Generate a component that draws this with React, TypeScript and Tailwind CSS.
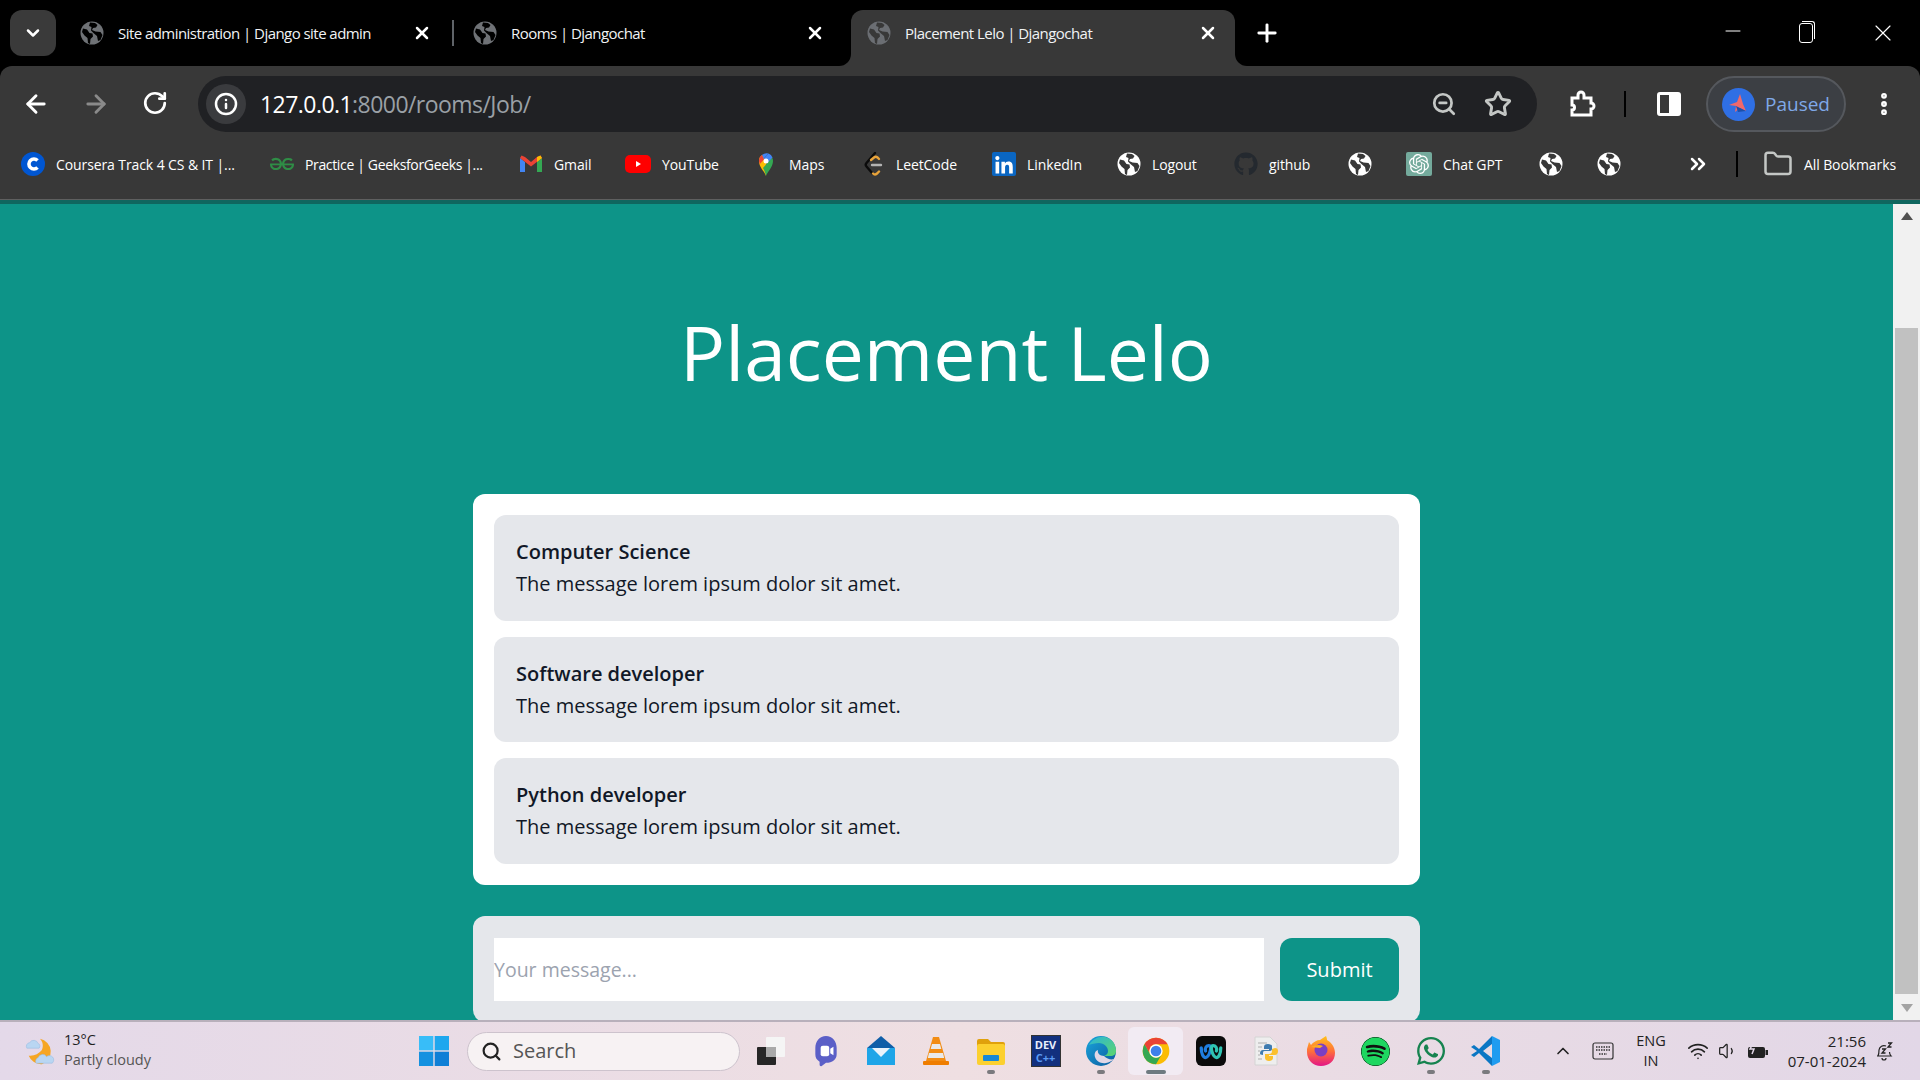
import { ArrowLeft, ArrowRight, ChevronDown, ChevronUp, ChevronsRight, EllipsisVertical, Folder, Info, Minus, Plus, RotateCw, Search, Star, Volume1, Wifi, X, ZoomOut } from 'lucide-react';
import { FaGithub, FaLinkedinIn, FaSpotify, FaWhatsapp } from 'react-icons/fa';
import { SiGeeksforgeeks, SiOpenai } from 'react-icons/si';

const Globe = ({ color = '#ffffff', cut = '#383838' }: { color?: string; cut?: string }) => (
  <svg viewBox="0 0 24 24" className="w-6 h-6 shrink-0">
    <circle cx="12" cy="12" r="11.5" fill={color} />
    <path d="M3 7.5l4 1 2.5 3.5 3 .5.5 3-2.5 2.5-.5 5-2-1-.5-5-3-2.500L2 11z" fill={cut} />
    <path d="M10 1.5l5 .5 2.5 2-1.5 2.500-3 .5-1 2 3.500 1.500 5 .5 2 3-2 5-2.500 1-1-5-3-2.500-3-3 .5-3.500-2.500-1z" fill={cut} />
  </svg>
);

const Tab = ({ title, active, sep }: { title: string; active?: boolean; sep?: boolean }) => (
  <div
    className={
      active
        ? 'relative w-[384px] h-[56px] ml-[1px] pl-[16px] pr-[17px] pb-[10px] flex items-center bg-[#383838] rounded-t-xl'
        : 'relative w-[393px] h-[56px] pl-[16px] pr-[25px] pb-[10px] flex items-center'
    }
  >
    <Globe color={active ? '#6b6e73' : '#6f7276'} cut={active ? '#383838' : '#000000'} />
    <span className="ml-[14px] flex-1 text-[15px] text-[#f1f3f4] whitespace-nowrap tracking-[-0.55px]">{title}</span>
    <X className="w-5 h-5 text-white" strokeWidth={3} />
    {sep && <div className="absolute right-[3px] top-[10px] w-[2px] h-[26px] bg-[#5f6368]" />}
    {active && (
      <>
        <div className="absolute left-[-12px] bottom-0 w-3 h-3 bg-[#383838]">
          <div className="w-3 h-3 bg-black rounded-br-xl" />
        </div>
        <div className="absolute right-[-12px] bottom-0 w-3 h-3 bg-[#383838]">
          <div className="w-3 h-3 bg-black rounded-bl-xl" />
        </div>
      </>
    )}
  </div>
);

const Coursera = () => (
  <svg viewBox="0 0 24 24" className="w-6 h-6 shrink-0">
    <circle cx="12" cy="12" r="12" fill="#0056d2" />
    <path d="M16.5 8.5a5 5 0 1 0 0 7" fill="none" stroke="#fff" strokeWidth="3.6" />
  </svg>
);

const Gmail = () => (
  <svg viewBox="0 0 24 24" className="w-6 h-6 shrink-0">
    <path d="M1 6v14h5V10z" fill="#4285f4" />
    <path d="M23 6v14h-5V10z" fill="#34a853" />
    <path d="M1 6l11 8.5L23 6l-1.5-2.5L18 5l-6 5-6-5-3.500-1.500z" fill="#ea4335" />
    <path d="M18 5l3.500-1.500L23 6l-5 4z" fill="#fbbc04" />
  </svg>
);

const YouTube = () => (
  <svg viewBox="0 0 26 24" className="w-[26px] h-6 shrink-0">
    <rect x="0" y="3" width="26" height="18" rx="5" fill="#ff0000" />
    <path d="M11 9l5 3-5 3z" fill="#fff" />
  </svg>
);

const Maps = () => (
  <svg viewBox="4 0 16 24" className="w-6 h-6 shrink-0">
    <path d="M12 24c-1-4-7-8.500-7-15a7 7 0 0 1 3-6l4.500 6z" fill="#fbbc04" />
    <path d="M12 24c1-4 7-8.500 7-15 0-1.200-.3-2.400-.9-3.400L9 16c1.300 2.400 2.500 5 3 8z" fill="#34a853" />
    <path d="M8 3a7 7 0 0 1 6.500-1.500L9.500 7z" fill="#4285f4" />
    <path d="M14.500 1.500A7 7 0 0 1 18.500 5.500L13.500 11l-4-4z" fill="#4285f4" />
    <path d="M5 9a7 7 0 0 1 3-6l2 4.500L5.800 12z" fill="#ea4335" />
    <circle cx="12" cy="9" r="2.500" fill="#fff" />
  </svg>
);

const LeetCode = () => (
  <svg viewBox="0 0 24 24" className="w-6 h-6 shrink-0" fill="none" strokeLinecap="round">
    <path d="M14 1L5.500 11c-1 1.200-1 2.500 0 3.500l6 7" stroke="#0b0b0b" strokeWidth="2.400" />
    <path d="M10 8l3-2.500c1-.8 2.500-.8 3.500 0L18 7" stroke="#e8a33a" strokeWidth="2.400" />
    <path d="M12 21.500c1 1 2.800 1 4 0l2-2" stroke="#e8a33a" strokeWidth="2.400" />
    <path d="M11 13h9" stroke="#b3b3b3" strokeWidth="2.400" />
  </svg>
);

const ChatGpt = () => (
  <div className="w-[26px] h-6 shrink-0 bg-[#74aa9c] flex items-center justify-center rounded-[2px]">
    <SiOpenai className="w-5 h-5 text-white" />
  </div>
);

const Profile = () => (
  <svg viewBox="0 0 33 33" className="w-[33px] h-[33px] shrink-0">
    <circle cx="16.500" cy="16.500" r="16.500" fill="#2f6fe4" />
    <path d="M18 6l3 10 3 7-6-3-5 4 1-6-7-1 8-3z" fill="#f0686a" />
    <path d="M14 18l4 2 6 3-8 1z" fill="#1d4fa8" />
  </svg>
);

const bookmarks = [
  { icon: <Coursera />, label: 'Coursera Track 4 CS & IT |...', w: 'w-[180px] tracking-[-0.1px]' },
  { icon: <SiGeeksforgeeks className="w-6 h-6 shrink-0 text-[#2f8d46]" />, label: 'Practice | GeeksforGeeks |...', w: 'w-[180px] tracking-[-0.35px]' },
  { icon: <Gmail />, label: 'Gmail', w: 'w-[37px] tracking-[-0.1px]' },
  { icon: <YouTube />, label: 'YouTube', w: 'w-[58px] tracking-[-0.1px]' },
  { icon: <Maps />, label: 'Maps', w: 'w-[38px] tracking-[-0.1px]' },
  { icon: <LeetCode />, label: 'LeetCode', w: 'w-[62px] tracking-[-0.1px]' },
  { icon: <div className="w-6 h-6 shrink-0 bg-[#0a66c2] rounded-[2px] flex items-end justify-center"><FaLinkedinIn className="w-5 h-5 text-white" /></div>, label: 'LinkedIn', w: 'w-[56px] tracking-[-0.1px]' },
  { icon: <Globe />, label: 'Logout', w: 'w-[48px] tracking-[-0.1px]' },
  { icon: <FaGithub className="w-6 h-6 shrink-0 text-[#24292f]" />, label: 'github', w: 'w-[45px] tracking-[-0.1px]' },
  { icon: <Globe /> },
  { icon: <ChatGpt />, label: 'Chat GPT', w: 'w-[62px] tracking-[-0.1px]' },
  { icon: <Globe /> },
  { icon: <Globe /> },
];

const messages = ['Computer Science', 'Software developer', 'Python developer'];

const Chrome = () => (
  <svg viewBox="0 0 48 48" className="w-8 h-8">
    <circle cx="24" cy="24" r="20" fill="#fbbc04" />
    <path d="M24 4A20 20 0 0 0 6.700 14L15.300 29A10 10 0 0 1 24 14H41.300A20 20 0 0 0 24 4Z" fill="#ea4335" />
    <path d="M6.700 14A20 20 0 0 0 24 44L32.700 29A10 10 0 0 1 15.300 29Z" fill="#34a853" />
    <circle cx="24" cy="24" r="10" fill="#fff" />
    <circle cx="24" cy="24" r="8" fill="#3f80ea" />
  </svg>
);

const taskbarIcons = [
  <svg viewBox="0 0 32 32" className="w-8 h-8">
    <rect x="2" y="12" width="19" height="18" rx="1" fill="#262626" />
    <rect x="11" y="2" width="19" height="20" rx="1" fill="#f5f5f5" />
    <rect x="11" y="12" width="10" height="10" fill="#a9a9a9" />
  </svg>,
  <svg viewBox="4 1 24 30" className="w-8 h-8">
    <path d="M16 2c6 0 10 5 10 11v6c0 5-4 8-10 8l-4 3c-1 .5-2 0-2-1v-3c-3-2-4-4-4-7v-6C6 7 10 2 16 2z" fill="#5b5fc7" />
    <rect x="11" y="11" width="8" height="10" rx="2" fill="#fff" />
    <path d="M20 14l3-2v8l-3-2z" fill="#fff" />
  </svg>,
  <svg viewBox="0 0 32 32" className="w-8 h-8">
    <path d="M2 13L16 1l14 12z" fill="#0f5ea8" />
    <rect x="2" y="13" width="28" height="17" fill="#1ea5e8" />
    <path d="M7 13h18l-9 9z" fill="#e9f3fb" />
  </svg>,
  <svg viewBox="0 0 32 32" className="w-8 h-8">
    <path d="M13 2h6l7 24H6z" fill="#f28c13" />
    <path d="M12 9h8l1.300 5H10.700zM9 18h14l1.200 5H7.800z" fill="#e9e9e9" />
    <rect x="3" y="26" width="26" height="4" rx="1" fill="#ef7d00" />
  </svg>,
  <svg viewBox="0 0 32 32" className="w-8 h-8">
    <path d="M2 6a2 2 0 0 1 2-2h9l3 3h12a2 2 0 0 1 2 2v4H2z" fill="#e0a10c" />
    <rect x="2" y="9" width="28" height="21" rx="2" fill="#fcd02f" />
    <rect x="8" y="20" width="16" height="6" rx="1" fill="#1788d6" />
  </svg>,
  <div className="w-[30px] h-[32px] bg-[#12307e] border border-[#333] flex flex-col items-center justify-center font-bold">
    <span className="text-[11px] leading-[13px] text-[#e8eefc]">DEV</span>
    <span className="text-[11px] leading-[13px] text-[#5b9bf5]">C++</span>
  </div>,
  <svg viewBox="0 0 32 32" className="w-8 h-8">
    <defs>
      <linearGradient id="edgeA" x1="0" y1="0" x2="1" y2="1">
        <stop offset="0" stopColor="#1aa5dc" />
        <stop offset="1" stopColor="#0c5a9e" />
      </linearGradient>
      <linearGradient id="edgeB" x1="0" y1="0" x2="1" y2="1">
        <stop offset="0" stopColor="#2bb5d8" />
        <stop offset="1" stopColor="#5ed66b" />
      </linearGradient>
    </defs>
    <circle cx="16" cy="16" r="15" fill="url(#edgeA)" />
    <path d="M4 10C8 3 16 0 23 3c5 2 8 7 8 13 0 3-2 5-6 5h-6c3-1 4-3 4-5 0-4-4-8-9-8-4 0-8 1-10 2z" fill="url(#edgeB)" />
    <path d="M19 21c-4 0-7-3-6-6-3 1-4 4-3 7 1 4 6 7 11 6 3-.5 6-2 8-4-3 1-7 0-10-3z" fill="#e1d7e6" />
  </svg>,
  <Chrome />,
  <div className="w-[30px] h-[30px] rounded-md bg-[#0b0b0b] flex items-center justify-center">
    <svg viewBox="0 0 24 24" className="w-[26px] h-[26px]">
      <path d="M3 9c0 6 2 9 4 9s3-2 4-5c1-3 1-6-1-6S6 9 7 12" fill="none" stroke="#1f7de0" strokeWidth="3" strokeLinecap="round" />
      <path d="M21 9c0 6-2 9-4 9s-3-2-4-5c-1-3-1-6 1-6s4 2 3 5" fill="none" stroke="#2fc4b2" strokeWidth="3" strokeLinecap="round" />
    </svg>
  </div>,
  <svg viewBox="0 0 32 32" className="w-8 h-8">
    <path d="M5 2h15l7 7v21H5z" fill="#eeeeee" stroke="#d4d4d4" />
    <path d="M8 8h9M8 12h4M8 16h2M8 20h2M8 24h4" stroke="#c4c4c4" strokeWidth="1.500" />
    <path d="M18 9c-3 0-4 1-4 3v2h5v1h-6c-2 0-3 1-3 4 0 0 1 1 3 1v-2c0-2 1-2 3-2h4c1 0 2-1 2-2v-3c0-1-2-2-4-2z" fill="#3f7cb0" />
    <path d="M22 14v2c0 2-1 3-3 3h-4v4c0 2 2 3 4 3s4-1 4-3v-2h-4v-1h6c2 0 3-2 3-4s-1-3-3-3z" fill="#fbc02d" />
  </svg>,
  <svg viewBox="0 0 32 32" className="w-8 h-8">
    <defs>
      <linearGradient id="fox" x1="0" y1="0" x2="0" y2="1">
        <stop offset="0" stopColor="#ffc21a" />
        <stop offset="0.500" stopColor="#ff7139" />
        <stop offset="1" stopColor="#e31587" />
      </linearGradient>
    </defs>
    <path d="M2 14l2-7 2 3c2-3 6-5 9-5l6-4c1 2 1 4 1 4 4 2 8 7 8 13 0 8-6 13-14 13S2 25 2 17z" fill="url(#fox)" />
    <circle cx="16" cy="15" r="6.500" fill="#7b3fc4" />
    <path d="M6 12c4-2 8-3 12-1l-3 2z" fill="#ffb01f" />
  </svg>,
  <div className="w-[29px] h-[29px] rounded-full bg-[#1ed760] flex items-center justify-center overflow-hidden">
    <FaSpotify className="w-[29px] h-[29px] text-[#1ed760] bg-[#111] rounded-full" />
  </div>,
  <FaWhatsapp className="w-8 h-8 text-[#16834f]" />,
  <svg viewBox="0 0 32 32" className="w-8 h-8">
    <path d="M22 1l8 4v22l-8 4V1z" fill="#1f9cf0" />
    <path d="M22 1L9 14l-5-4-3 2 6 4-6 4 3 2 5-4 13 13V23l-9-7 9-7z" fill="#0a77c4" />
  </svg>,
];

const activeDots = [4, 6, 12, 13];

export default function App() {
  return (
    <div className="h-screen w-screen overflow-hidden flex flex-col font-['Open_Sans',sans-serif]">
      <header className="bg-black shrink-0">
        <div className="h-[66px] flex items-end pl-[10px]">
          <div className="w-[46px] h-[46px] mb-[10px] mr-[8px] rounded-xl bg-[#3a3a3a] flex items-center justify-center">
            <ChevronDown className="w-5 h-5 text-white" strokeWidth={3} />
          </div>
          <Tab title="Site administration | Django site admin" sep />
          <Tab title="Rooms | Djangochat" />
          <Tab title="Placement Lelo | Djangochat" active />
          <Plus className="w-7 h-7 mb-[19px] ml-[18px] text-white" strokeWidth={2.5} />
          <div className="ml-auto flex mb-[19px] text-white">
            <div className="w-[75px] flex justify-center"><Minus className="w-6 h-6" strokeWidth={1} /></div>
            <div className="w-[75px] flex justify-center pr-[4px]">
              <div className="relative w-[14px] h-[20px] mt-[4px] border border-white rounded-[3px]">
                <div className="absolute top-[-3px] left-[2px] w-[13px] h-[18px] border-t border-r border-white rounded-tr-[3px]" />
              </div>
            </div>
            <div className="w-[75px] flex justify-center"><X className="w-7 h-7" strokeWidth={1} /></div>
          </div>
        </div>
        <div className="bg-[#383838] rounded-t-xl">
          <div className="h-[66px] pt-[10px] flex items-center text-white">
            <div className="pl-[6px] flex shrink-0">
              <div className="w-[60px] flex justify-center"><ArrowLeft className="w-7 h-7" strokeWidth={2.5} /></div>
              <div className="w-[60px] flex justify-center"><ArrowRight className="w-7 h-7 text-[#8a8a8a]" strokeWidth={2.5} /></div>
              <div className="w-[60px] flex justify-center pr-[2px]"><RotateCw className="w-[26px] h-[26px]" strokeWidth={2.5} /></div>
            </div>
            <div className="ml-[12px] w-[1339px] h-[56px] rounded-full bg-[#202124] flex items-center pr-[25px]">
              <div className="ml-[8px] w-[40px] h-[40px] rounded-full bg-[#3a3b3e] flex items-center justify-center">
                <Info className="w-6 h-6 text-white" strokeWidth={2.5} />
              </div>
              <div className="ml-[14px] flex-1 text-[23px] tracking-[-0.55px] text-[#9aa0a6]">
                <span className="text-white">127.0.0.1</span>:8000/rooms/Job/
              </div>
              <ZoomOut className="w-[26px] h-[26px] text-[#c4c7c5]" strokeWidth={2.5} />
              <Star className="ml-[27px] w-7 h-7 text-[#c4c7c5]" strokeWidth={2.5} />
            </div>
            <svg viewBox="0 0 28 28" className="ml-[31px] w-7 h-7 shrink-0">
              <path d="M4 8h6V5a3 3 0 0 1 6 0v3h7v5a3 3 0 0 1 0 6v6H4v-5a2.500 2.500 0 0 0 0-5z" fill="none" stroke="#fff" strokeWidth="3" />
            </svg>
            <div className="ml-[28px] w-[2px] h-[26px] bg-black" />
            <div className="ml-[31px] w-[24px] h-[24px] border-[3px] border-white rounded-[3px] flex shrink-0">
              <div className="ml-auto w-[9px] bg-white" />
            </div>
            <div className="ml-[25px] w-[140px] h-[56px] rounded-full border-2 border-[#55585d] bg-[#3c3f44] flex items-center pl-[14px] shrink-0">
              <Profile />
              <span className="ml-[10px] text-[19px] text-[#7fa8e8]">Paused</span>
            </div>
            <EllipsisVertical className="ml-[24px] w-7 h-7" strokeWidth={3} />
          </div>
          <div className="h-[68px] pl-[21px] pb-[3px] flex items-center text-white border-b border-[#5f5f5f]">
            <div className="flex items-center gap-[34px]">
              {bookmarks.map((b, i) => (
                <div key={i} className="flex items-center gap-[11px]">
                  {b.icon}
                  {b.label && <span className={`${b.w} text-[14px] whitespace-nowrap`}>{b.label}</span>}
                </div>
              ))}
            </div>
            <div className="ml-auto pr-[21px] flex items-center">
              <ChevronsRight className="w-6 h-6" strokeWidth={2.5} />
              <div className="ml-[26px] w-[2px] h-[26px] bg-black" />
              <Folder className="ml-[25px] w-[30px] h-[30px] text-[#c4c7c5]" strokeWidth={2} />
              <span className="ml-[11px] w-[95px] text-[14px] tracking-[-0.1px] whitespace-nowrap">All Bookmarks</span>
            </div>
          </div>
        </div>
      </header>

      <div className="h-1 shrink-0 bg-[#0f665f]" />

      <main className="flex-1 min-h-0 flex bg-[#0d9488]">
        <div className="flex-1 min-w-0 flex flex-col items-center overflow-hidden">
          <h1 className="mt-[100px] mb-[94px] h-[96px] leading-[96px] text-[75px] text-white whitespace-nowrap">Placement Lelo</h1>
          <div className="w-[947px] shrink-0 bg-white rounded-xl p-[21px] flex flex-col gap-4">
            {messages.map((m) => (
              <div key={m} className="h-[105.5px] bg-[#e5e7eb] rounded-xl pl-[22px] pr-[21px] pt-[21px] text-[#111827] text-[20px] leading-[32px]">
                <div className="font-semibold">{m}</div>
                <div>The message lorem ipsum dolor sit amet.</div>
              </div>
            ))}
          </div>
          <form className="mt-[31.5px] w-[947px] shrink-0 bg-[#e5e7eb] rounded-xl p-[21px] pt-[22px] flex gap-4">
            <input
              placeholder="Your message..."
              className="flex-1 h-[63px] bg-white text-[19.5px] outline-none placeholder:text-[#9ca3af]"
            />
            <button type="button" className="w-[119px] h-[63px] rounded-xl bg-[#0d9488] text-white text-[20px]">Submit</button>
          </form>
        </div>
        <div className="w-[27px] shrink-0 bg-[#f1f1f1] flex flex-col items-center">
          <svg viewBox="0 0 16 16" className="w-4 h-4 mt-[5px]"><path d="M8 3l6 8H2z" fill="#505050" /></svg>
          <div className="mt-[103px] w-[23px] h-[666px] bg-[#c1c1c1]" />
          <svg viewBox="0 0 16 16" className="w-4 h-4 mt-[5px]"><path d="M8 13l6-8H2z" fill="#a3a3a3" /></svg>
        </div>
      </main>

      <footer className="h-[60px] shrink-0 flex items-center border-t-2 border-[#b8b0bb] bg-linear-to-r from-[#e4d9e9] via-[#efdfe2] to-[#e2d7e7] text-[#1f1f1f]">
        <div className="w-[419px] shrink-0 pl-[25px] flex items-center">
          <svg viewBox="0 0 32 34" className="w-[30px] h-[34px] shrink-0">
            <path d="M16 4a14 14 0 0 1 2 27A14 14 0 0 1 4 22a16 16 0 0 0 14-6c2-4 1-9-2-12z" fill="#f6a623" />
            <path d="M2 14a4 4 0 0 1 3-6 5 5 0 0 1 9 1 3 3 0 0 1 1 5z" fill="#b9d6f2" stroke="#8fb6de" strokeWidth="0.500" />
            <path d="M12 30a4 4 0 0 1 2-6 5 5 0 0 1 9-1 4 4 0 0 1 6 7z" fill="#b9d6f2" stroke="#8fb6de" strokeWidth="0.500" />
          </svg>
          <div className="ml-[9px] pb-[2px] text-[14.5px] leading-[20px]">
            <div>13°C</div>
            <div className="text-[#555]">Partly cloudy</div>
          </div>
        </div>
        <svg viewBox="0 0 30 30" className="w-[30px] h-[30px] shrink-0">
          <rect x="0" y="0" width="14.300" height="14.300" fill="#38bdf8" />
          <rect x="15.700" y="0" width="14.300" height="14.300" fill="#1ea7ee" />
          <rect x="0" y="15.700" width="14.300" height="14.300" fill="#1491e0" />
          <rect x="15.700" y="15.700" width="14.300" height="14.300" fill="#0f7fd6" />
        </svg>
        <div className="ml-[18px] w-[273px] h-[39px] rounded-full bg-[#f7f2f3] border border-[#cdc3cd] flex items-center pl-[13px] shrink-0">
          <Search className="w-[21px] h-[21px] text-[#222]" strokeWidth={2.5} />
          <span className="ml-[11px] text-[20px] text-[#555]">Search</span>
        </div>
        <div className="ml-[3px] flex shrink-0">
          {taskbarIcons.map((icon, i) => (
            <div
              key={i}
              className={
                i === 7
                  ? 'relative w-[55px] h-[48px] flex items-center justify-center bg-[#f2ebf3] rounded-md'
                  : 'relative w-[55px] h-[48px] flex items-center justify-center'
              }
            >
              {icon}
              {i === 7 && <div className="absolute bottom-[1px] w-5 h-[4px] rounded-full bg-[#6e7a80]" />}
              {activeDots.includes(i) && <div className="absolute bottom-[1px] w-2 h-[4px] rounded-full bg-[#7a7a7e]" />}
            </div>
          ))}
        </div>
        <ChevronUp className="ml-[40px] w-5 h-5 shrink-0 text-[#222]" strokeWidth={2} />
        <svg viewBox="0 0 22 18" className="ml-[19px] w-[22px] h-[18px] shrink-0">
          <rect x="1" y="1" width="20" height="16" rx="2" fill="none" stroke="#333" strokeWidth="1.200" />
          <path d="M4 5h14M4 8h14M7 12h8" stroke="#333" strokeWidth="1.500" strokeDasharray="1.500 1" />
        </svg>
        <div className="ml-[17px] w-[40px] text-center text-[14.5px] leading-[20px] text-[#222] shrink-0">
          <div>ENG</div>
          <div>IN</div>
        </div>
        <Wifi className="ml-[16px] w-[22px] h-[22px] text-[#222] shrink-0" strokeWidth={1.8} />
        <Volume1 className="ml-[9px] w-5 h-5 text-[#222] shrink-0" strokeWidth={1.5} />
        <svg viewBox="0 0 22 20" className="ml-[9px] w-[22px] h-[20px] shrink-0">
          <rect x="1" y="6" width="17" height="11" rx="2" fill="#222" />
          <rect x="18.500" y="9" width="2.500" height="5" fill="#222" />
          <path d="M7 1L3 8h4l-2 5" fill="none" stroke="#e4d9e9" strokeWidth="1.500" />
        </svg>
        <div className="ml-[7px] w-[90px] text-right text-[15px] leading-[20px] text-[#222] shrink-0">
          <div>21:56</div>
          <div className="whitespace-nowrap">07-01-2024</div>
        </div>
        <svg viewBox="0 0 20 20" className="ml-[8px] w-5 h-5 shrink-0">
          <path d="M4 15c1-2 1-4 1-6a5 5 0 0 1 7-4M3 15h14c-1-1-1.500-2-1.500-4M8 17a2 2 0 0 0 4 0" fill="none" stroke="#222" strokeWidth="1.200" />
          <path d="M8 8h3.500L8 12h3.500M14 2h3.500L14 6h3.500" fill="none" stroke="#222" strokeWidth="1.300" />
        </svg>
      </footer>
    </div>
  );
}
